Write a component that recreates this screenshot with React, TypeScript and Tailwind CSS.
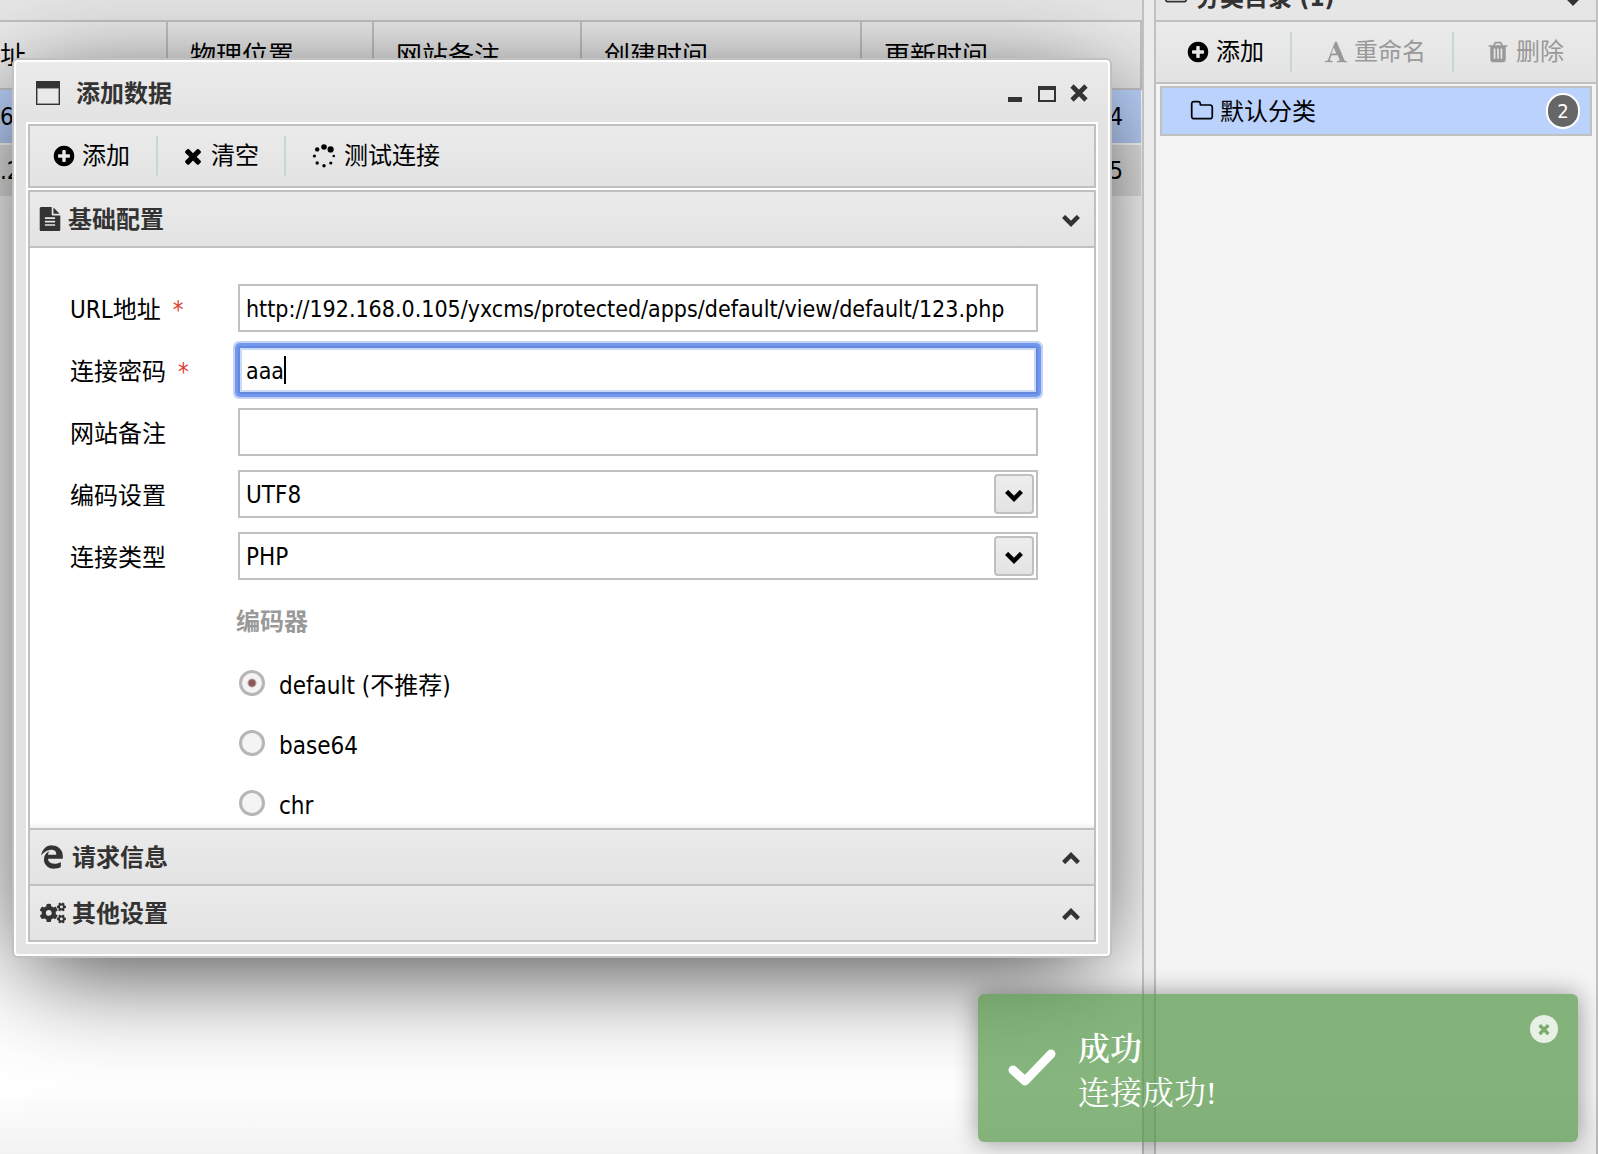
import React, { useState } from 'react';
import { FaCogs, FaEdgeLegacy } from 'react-icons/fa';

type IconProps = { className?: string };

const Glyph: React.FC<IconProps & { d: string }> = ({ className, d }) => (
    <svg viewBox="0 0 1792 1792" fill="currentColor" aria-hidden="true" className={className}>
        <path d={d} />
    </svg>
);

const PLUS_CIRCLE = 'M1344 960v-128q0-26-19-45t-45-19h-256v-256q0-26-19-45t-45-19h-128q-26 0-45 19t-19 45v256h-256q-26 0-45 19t-19 45v128q0 26 19 45t45 19h256v256q0 26 19 45t45 19h128q26 0 45-19t19-45v-256h256q26 0 45-19t19-45zm320-64q0 209-103 385.5t-279.5 279.5-385.5 103-385.5-103-279.5-279.5-103-385.5 103-385.5 279.5-279.5 385.5-103 385.5 103 279.5 279.5 103 385.5z';
const TIMES = 'M1490 1322q0 40-28 68l-136 136q-28 28-68 28t-68-28l-294-294-294 294q-28 28-68 28t-68-28l-136-136q-28-28-28-68t28-68l294-294-294-294q-28-28-28-68t28-68l136-136q28-28 68-28t68 28l294 294 294-294q28-28 68-28t68 28l136 136q28 28 28 68t-28 68l-294 294 294 294q28 28 28 68z';
const FONT = 'M725 559l-170 450q33 0 136.5 2t160.5 2q19 0 57-2-87-253-184-452zm-661 1105l2-79q23-7 56-12.5t57-10.5 49.5-14.5 44.5-29 31-50.5l237-616 280-724h128q8 14 11 21l205 480q33 78 106 257.5t114 274.5q15 34 58 144.5t72 168.5q20 45 35 57 19 15 88 29.5t84 20.5q6 38 6 57 0 5-.5 13.5t-.5 12.5q-63 0-190-8t-191-8q-76 0-215 7t-178 8q0-43 4-78l131-28q1 0 12.5-2.5t15.5-3.5 14.5-4.5 15-6.5 11-8 9-11 2.5-14q0-16-31-96.5t-72-177.5-42-100l-450-2q-26 58-76.5 195.5t-50.5 162.5q0 22 14 37.5t43.5 24.5 48.5 13.5 57 8.5 41 4q1 19 1 58 0 9-2 27-58 0-174.5-10t-174.5-10q-8 0-26.5 4t-21.5 4q-80 14-188 14z';
const TRASH = 'M704 1376v-704q0-14-9-23t-23-9h-64q-14 0-23 9t-9 23v704q0 14 9 23t23 9h64q14 0 23-9t9-23zm256 0v-704q0-14-9-23t-23-9h-64q-14 0-23 9t-9 23v704q0 14 9 23t23 9h64q14 0 23-9t9-23zm256 0v-704q0-14-9-23t-23-9h-64q-14 0-23 9t-9 23v704q0 14 9 23t23 9h64q14 0 23-9t9-23zm-544-992h448l-48-117q-7-9-17-11h-317q-10 2-17 11zm928 32v64q0 14-9 23t-23 9h-96v948q0 83-47 143.5t-113 60.5h-832q-66 0-113-58.5t-47-141.5v-952h-96q-14 0-23-9t-9-23v-64q0-14 9-23t23-9h309l70-167q15-37 54-63t79-26h320q40 0 79 26t54 63l70 167h309q14 0 23 9t9 23z';
const FILE_TEXT = 'M1596 476q14 14 28 36h-472v-472q22 14 36 28zm-476 164h544v1056q0 40-28 68t-68 28h-1344q-40 0-68-28t-28-68v-1600q0-40 28-68t68-28h800v544q0 40 28 68t68 28zm160 736v-64q0-14-9-23t-23-9h-704q-14 0-23 9t-9 23v64q0 14 9 23t23 9h704q14 0 23-9t9-23zm0-256v-64q0-14-9-23t-23-9h-704q-14 0-23 9t-9 23v64q0 14 9 23t23 9h704q14 0 23-9t9-23zm0-256v-64q0-14-9-23t-23-9h-704q-14 0-23 9t-9 23v64q0 14 9 23t23 9h704q14 0 23-9t9-23z';
const FOLDER = 'M1600 1312v-704q0-40-28-68t-68-28h-704q-40 0-68-28t-28-68v-64q0-40-28-68t-68-28h-320q-40 0-68 28t-28 68v960q0 40 28 68t68 28h1216q40 0 68-28t28-68zm128-704v704q0 92-66 158t-158 66h-1216q-92 0-158-66t-66-158v-960q0-92 66-158t158-66h320q92 0 158 66t66 158v32h672q92 0 158 66t66 158z';

const SpinnerIcon: React.FC<IconProps> = ({ className }) => (
    <svg viewBox="0 0 24 24" fill="currentColor" aria-hidden="true" className={className}>
        <circle cx="12" cy="3" r="2.8" />
        <circle cx="18.6" cy="5.4" r="3.1" />
        <circle cx="5.2" cy="5.4" r="2.2" />
        <circle cx="2.4" cy="12" r="1.6" />
        <circle cx="21.8" cy="12" r="1.3" />
        <circle cx="5.2" cy="19" r="1.7" />
        <circle cx="18.8" cy="19" r="1.6" />
        <circle cx="12" cy="21.8" r="1.7" />
    </svg>
);

const Chevron: React.FC<IconProps & { up?: boolean }> = ({ className, up }) => (
    <svg viewBox="0 0 18 12" fill="none" stroke="currentColor" strokeWidth="4.4" aria-hidden="true" className={className}>
        <path d={up ? 'M1.6 10.6L9 3.2l7.4 7.4' : 'M1.6 1.4L9 8.8l7.4-7.4'} />
    </svg>
);

const ToolButton: React.FC<{ icon: React.ReactNode; label: string; className: string; disabled?: boolean }> = ({ icon, label, className, disabled }) => (
    <button type="button" disabled={disabled} className={`flex h-10 items-center gap-1.5 whitespace-nowrap text-2xl leading-10 disabled:text-[#999] ${className}`}>
        {icon}
        <span>{label}</span>
    </button>
);

const SectionHeader: React.FC<{ icon: React.ReactNode; title: string; open?: boolean; className?: string }> = ({ icon, title, open, className }) => (
    <button
        type="button"
        aria-expanded={!!open}
        className={`flex h-14 w-full shrink-0 items-center border-[#c0c0c0] bg-linear-to-b from-[#ebebeb] to-[#e3e3e3] pr-3.5 pl-2 text-left text-2xl font-bold text-[#333] ${className}`}
    >
        {icon}
        <span className="flex-1 pt-0.5">{title}</span>
        <Chevron up={!open} className={open ? 'mt-1 h-3 w-[18px]' : 'mt-0.5 h-3 w-[18px]'} />
    </button>
);

const FormRow: React.FC<{ id: string; label: string; required?: boolean; children: React.ReactNode }> = ({ id, label, required, children }) => (
    <div className="flex h-12 items-center">
        <label htmlFor={id} className="w-[168px] shrink-0 whitespace-nowrap pt-1">
            {label}
            {required && <span className="ml-3 text-[#e0402f]">*</span>}
        </label>
        <div className="relative h-12 min-w-0 flex-1">{children}</div>
    </div>
);

const fieldClass = 'h-12 w-full border-2 bg-white pt-0.5 pl-1.5 outline-none';

const SelectField: React.FC<{ id: string; value: string; options: string[]; onChange: (v: string) => void }> = ({ id, value, options, onChange }) => (
    <>
        <select id={id} value={value} onChange={e => onChange(e.target.value)} className={`${fieldClass} appearance-none border-[#c0c0c0]`}>
            {options.map(o => <option key={o}>{o}</option>)}
        </select>
        <span className="pointer-events-none absolute top-1 right-1 flex size-10 items-center justify-center rounded border-2 border-[#c0c0c0] bg-linear-to-b from-[#ededed] to-[#e3e3e3] pt-1">
            <Chevron className="h-3 w-[18px]" />
        </span>
    </>
);

const AddDataDialog: React.FC = () => {
    const [url, setUrl] = useState('http://192.168.0.105/yxcms/protected/apps/default/view/default/123.php');
    const [password, setPassword] = useState('aaa');
    const [note, setNote] = useState('');
    const [encode, setEncode] = useState('UTF8');
    const [type, setType] = useState('PHP');
    const [encoder, setEncoder] = useState('default');

    const encoders = [
        { value: 'default', label: 'default (不推荐)' },
        { value: 'base64', label: 'base64' },
        { value: 'chr', label: 'chr' },
    ];

    return (
        <div
            role="dialog"
            aria-label="添加数据"
            className="absolute top-[58px] right-[30px] left-3 flex h-[900px] flex-col rounded-md border-2 border-[#c0c0c0] bg-[#e3e3e3] shadow-[0_22px_100px_-14px_rgba(0,0,0,0.8)]"
        >
            <div className="flex min-h-0 flex-1 flex-col rounded border-2 border-white bg-linear-to-b from-[#ebebeb] to-[#e3e3e3] to-[60px] px-2.5 pb-2.5">
                <div className="flex h-[60px] shrink-0 items-center px-2.5 pt-0.5 text-[#333]">
                    <svg viewBox="0 0 24 24" aria-hidden="true" className="size-6">
                        <path d="M0 0h24v24H0z" fill="#333" />
                        <path d="M1.5 7.5h21v15h-21z" fill="#e9e9e9" stroke="#999" />
                    </svg>
                    <h2 className="ml-4 flex-1 pt-0.5 text-2xl font-bold">添加数据</h2>
                    <div className="flex items-center gap-3.5">
                        <button type="button" aria-label="最小化">
                            <svg viewBox="0 0 18 18" className="size-[18px]"><path d="M2 13h14v5H2z" fill="currentColor" /></svg>
                        </button>
                        <button type="button" aria-label="最大化">
                            <svg viewBox="0 0 18 18" className="size-[18px]"><path d="M0 2h18v16H0zM2 6v10h14V6z" fill="currentColor" fillRule="evenodd" /></svg>
                        </button>
                        <button type="button" aria-label="关闭">
                            <svg viewBox="0 0 18 18" className="size-[18px]"><path d="M2 2l14 14M16 2L2 16" stroke="currentColor" strokeWidth="4.6" /></svg>
                        </button>
                    </div>
                </div>

                <div className="flex min-h-0 flex-1 flex-col border-2 border-white bg-white">
                    <div className="mb-0.5 flex h-16 shrink-0 items-center border-2 border-[#c0c0c0] bg-linear-to-b from-[#ebebeb] to-[#e3e3e3]">
                        <ToolButton icon={<Glyph d={PLUS_CIRCLE} className="size-6" />} label="添加" className="border-r-2 border-[#c8d6da] pr-[26px] pl-[22px]" />
                        <ToolButton icon={<Glyph d={TIMES} className="size-6" />} label="清空" className="border-r-2 border-[#c8d6da] pr-[25px] pl-[23px]" />
                        <ToolButton icon={<SpinnerIcon className="mr-0.5 size-6" />} label="测试连接" className="pl-[26px]" />
                    </div>

                    <div className="flex min-h-0 flex-1 flex-col border-2 border-[#c0c0c0]">
                        <SectionHeader open icon={<Glyph d={FILE_TEXT} className="mr-1.5 size-6" />} title="基础配置" className="border-b-2" />
                        <form className="flex min-h-0 flex-1 flex-col gap-3.5 overflow-hidden bg-white pt-9 pr-14 pl-10 text-2xl text-black shadow-[inset_0_-6px_4px_-4px_rgba(0,0,0,0.08)]">
                            <FormRow id="url" label="URL地址" required>
                                <input id="url" type="text" value={url} onChange={e => setUrl(e.target.value)} className={`${fieldClass} border-[#c0c0c0] text-[23px]`} />
                            </FormRow>
                            <FormRow id="pwd" label="连接密码" required>
                                <input
                                    id="pwd"
                                    type="text"
                                    value={password}
                                    onChange={e => setPassword(e.target.value)}
                                    className={`${fieldClass} rounded-xs border-[#6389de] text-[23px] shadow-[inset_0_0_0_2px_#cbd9f8,0_0_0_3px_#7298ee,0_0_0_5px_#c3d2f6]`}
                                />
                                <span className="pointer-events-none absolute top-2.5 left-[46px] h-7 w-0.5 bg-black" />
                            </FormRow>
                            <FormRow id="note" label="网站备注">
                                <input id="note" type="text" value={note} onChange={e => setNote(e.target.value)} className={`${fieldClass} border-[#c0c0c0] text-[23px]`} />
                            </FormRow>
                            <FormRow id="encode" label="编码设置">
                                <SelectField id="encode" value={encode} options={['UTF8', 'GBK', 'BIG5']} onChange={setEncode} />
                            </FormRow>
                            <FormRow id="type" label="连接类型">
                                <SelectField id="type" value={type} options={['PHP', 'ASP', 'CUSTOM']} onChange={setType} />
                            </FormRow>
                            <fieldset className="pl-[166px]">
                                <legend className="h-[60px] pt-3 font-bold text-[#999]">编码器</legend>
                                {encoders.map(item => (
                                    <label key={item.value} className="flex h-[60px] items-center">
                                        <input
                                            type="radio"
                                            name="encoder"
                                            value={item.value}
                                            checked={encoder === item.value}
                                            onChange={() => setEncoder(item.value)}
                                            className="mr-3.5 mb-0.5 ml-[3px] size-[26px] appearance-none rounded-full border-[3px] border-[#b8b5b5] bg-[#f4f4f4] checked:bg-[radial-gradient(circle,#8a5a5a_0,#8a5a5a_3px,#f4f4f4_5px)]"
                                        />
                                        <span className="pt-1">{item.label}</span>
                                    </label>
                                ))}
                            </fieldset>
                        </form>
                        <SectionHeader icon={<FaEdgeLegacy className="mr-2 ml-0.5 size-6" />} title="请求信息" className="border-t-2" />
                        <SectionHeader icon={<FaCogs className="mr-1.5 ml-0.5 size-[26px]" />} title="其他设置" className="border-t-2" />
                    </div>
                </div>
            </div>
        </div>
    );
};

const DataTable: React.FC = () => (
    <table className="w-full table-fixed border-collapse text-left text-black">
        <colgroup>
            <col className="w-[167px]" />
            <col className="w-[206px]" />
            <col className="w-[208px]" />
            <col className="w-[280px]" />
            <col />
        </colgroup>
        <thead className="bg-linear-to-b from-[#ebebeb] to-[#e3e3e3]">
            <tr className="h-[67px] border-b-2 border-[#c0c0c0] text-[26px]">
                <th className="border-r-2 border-[#c0c0c0] pt-0.5 font-normal">址</th>
                {['物理位置', '网站备注', '创建时间', '更新时间'].map(name => (
                    <th key={name} className="border-r-2 border-[#c0c0c0] pt-0.5 pl-[22px] font-normal">{name}</th>
                ))}
            </tr>
        </thead>
        <tbody className="text-2xl">
            <tr className="h-[55px] border-b-2 border-white bg-[#bad2fc]">
                <td colSpan={4}>6</td>
                <td className="pr-[18px] text-right">4</td>
            </tr>
            <tr className="h-[52px] bg-[#e6e6e6]">
                <td colSpan={4}>.2</td>
                <td className="pr-[18px] text-right">5</td>
            </tr>
        </tbody>
    </table>
);

const CategoryPanel: React.FC = () => (
    <aside className="flex w-[444px] shrink-0 flex-col border-x-2 border-[#c0c0c0] bg-[#f4f4f4]">
        <div className="flex h-[22px] items-end overflow-hidden border-b-2 border-[#c0c0c0] bg-[#e6e6e6] pr-3.5 pl-2 text-2xl leading-9 font-bold text-[#333]">
            <Glyph d={FOLDER} className="mr-2 mb-3.5 size-6" />
            <span className="mb-1 flex-1">分类目录 (1)</span>
            <Chevron className="mb-3.5 h-3 w-[18px]" />
        </div>
        <div className="flex h-[62px] items-center border-b-2 border-[#c0c0c0] bg-linear-to-b from-[#ebebeb] to-[#e3e3e3] text-black">
            <ToolButton icon={<Glyph d={PLUS_CIRCLE} className="size-6" />} label="添加" className="border-r-2 border-[#c8d6da] pr-[26px] pl-[30px]" />
            <ToolButton disabled icon={<Glyph d={FONT} className="size-6" />} label="重命名" className="border-r-2 border-[#c8d6da] pr-[26px] pl-8" />
            <ToolButton disabled icon={<Glyph d={TRASH} className="size-6" />} label="删除" className="pl-8" />
        </div>
        <ul className="px-1 py-0.5">
            <li className="flex h-[50px] items-center border-2 border-[#c0c0c0] bg-[#bad2fc] pr-2.5 pl-7 text-2xl text-black">
                <Glyph d={FOLDER} className="mr-1.5 size-6" />
                <span className="flex-1 pt-0.5">默认分类</span>
                <span className="flex h-9 w-[34px] items-center justify-center rounded-full border-2 border-white bg-[#666] text-xl text-white">2</span>
            </li>
        </ul>
    </aside>
);

const Toast: React.FC = () => (
    <div role="status" className="absolute right-5 bottom-3 flex h-[148px] w-[600px] items-center rounded-md bg-[#539746]/70 pl-[30px] font-['Liberation_Serif','Noto_Serif_CJK_SC','Noto_Sans_CJK_SC',serif] text-[32px] leading-[44px] text-white shadow-[0_0_24px_rgba(0,0,0,0.4)]">
        <svg viewBox="0 0 48 38" fill="none" stroke="currentColor" strokeWidth="9" strokeLinecap="round" strokeLinejoin="round" aria-hidden="true" className="h-[38px] w-12">
            <path d="M5 21l12 11L43 5" />
        </svg>
        <div className="ml-[22px] flex-1 pt-1.5">
            <div className="font-semibold">成功</div>
            <div>连接成功!</div>
        </div>
        <button type="button" aria-label="关闭" className="mt-[21px] mr-5 flex size-7 items-center justify-center self-start rounded-full bg-white/80 text-[#7cab70]">
            <Glyph d={TIMES} className="size-4" />
        </button>
    </div>
);

const App: React.FC = () => {
    return (
        <div className="relative flex h-screen overflow-hidden bg-[#ebebeb] font-['DejaVu_Sans_Condensed','Noto_Sans_CJK_SC',sans-serif]">
            <main className="relative min-w-0 flex-1 overflow-hidden border-r-2 border-[#c0c0c0] bg-white">
                <div className="h-[22px] border-b-2 border-[#c0c0c0] bg-[#e6e6e6]" />
                <DataTable />
                <AddDataDialog />
            </main>
            <div className="w-2.5 shrink-0 bg-[#ebebeb]" />
            <CategoryPanel />
            <div className="pointer-events-none absolute inset-x-0 bottom-0 h-16 bg-linear-to-b from-transparent to-black/5" />
            <Toast />
        </div>
    );
};

export default App;
